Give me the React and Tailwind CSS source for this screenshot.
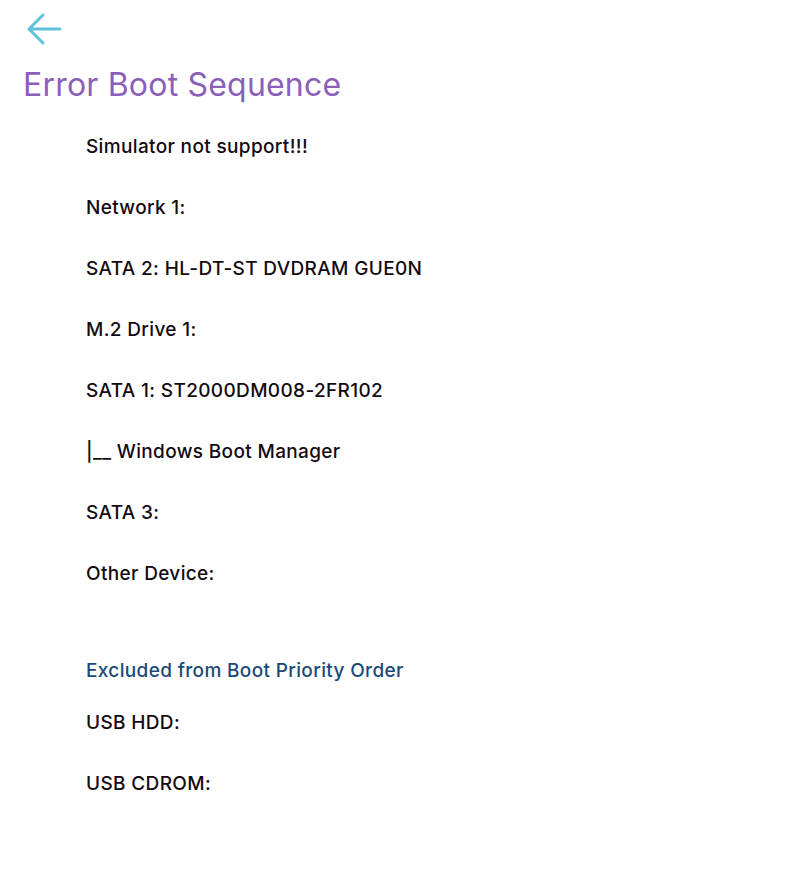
import React from "react";

const items = [
  "Simulator not support!!!",
  "Network 1:",
  "SATA 2: HL-DT-ST DVDRAM GUE0N",
  "M.2 Drive 1:",
  "SATA 1: ST2000DM008-2FR102",
  "|__ Windows Boot Manager",
  "SATA 3:",
  "Other Device:",
];

export default function App() {
  return (
    <div className="min-h-[885px] bg-white" style={{ fontFamily: "Inter, 'Noto Sans', sans-serif" }}>
      <div className="pl-[26px] pt-[12px]">
        <svg width="36" height="34" viewBox="0 0 36 34" fill="none" stroke="#5fc3dc" strokeWidth="3" strokeLinecap="round" strokeLinejoin="round">
          <path d="M34 17H3M17 3L3 17l14 14" />
        </svg>
      </div>
      <h1 className="pl-[23px] mt-[19px] text-[32px] leading-[40px] tracking-[0.2px] text-[#8b5fb9]">Error Boot Sequence</h1>
      <div className="pl-[86px] pt-[30px] flex flex-col gap-[38px] text-[19px] leading-[23px] tracking-[0.35px] font-medium text-[#140a12]">
        {items.map((t) => (
          <p key={t}>{t}</p>
        ))}
      </div>
      <div className="pl-[86px] pt-[74px] flex flex-col gap-[29px] text-[19px] leading-[23px] tracking-[0.35px] font-medium">
        <p className="text-[#1c4a78]">Excluded from Boot Priority Order</p>
        <div className="flex flex-col gap-[38px] text-[#140a12]">
          <p>USB HDD:</p>
          <p>USB CDROM:</p>
        </div>
      </div>
    </div>
  );
}
